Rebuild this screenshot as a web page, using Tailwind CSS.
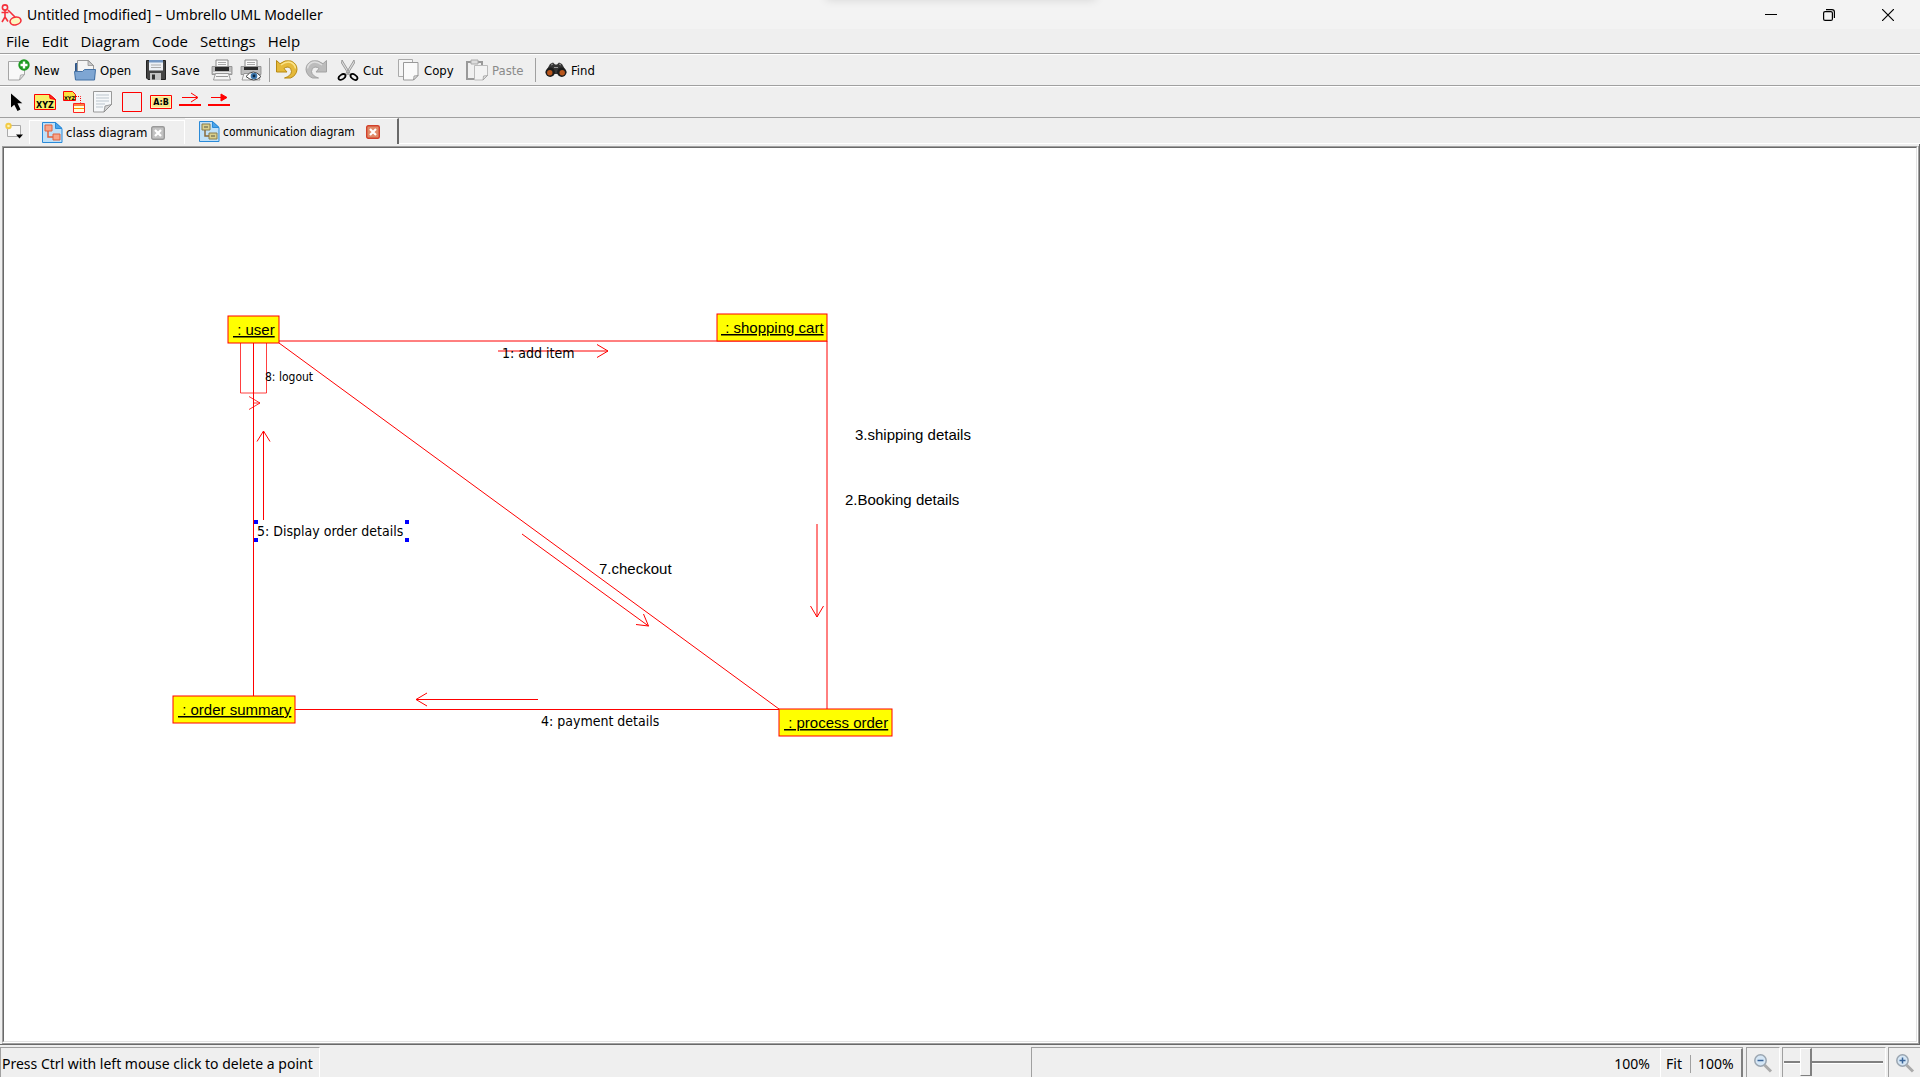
<!DOCTYPE html>
<html lang="en">
<head>
<meta charset="utf-8">
<title>Untitled [modified] – Umbrello UML Modeller</title>
<script src="https://cdn.jsdelivr.net/npm/@tailwindcss/browser@4"></script>
</head>
<body class="h-screen flex flex-col overflow-hidden bg-[#efefef] text-black font-['Open_Sans',sans-serif]">

<!-- Title bar -->
<header class="relative h-[29px] shrink-0 flex items-center bg-[#f3f3f3]">
  <div class="absolute -top-5 left-[43%] w-[270px] h-5 shadow-[0_0_10px_rgba(0,0,0,0.12)]"></div>
  <svg class="w-[22px] h-[22px]" viewBox="0 0 22 22" fill="none" stroke="#f5303a" stroke-width="1.6">
    <circle cx="5" cy="3.500" r="2.600"/><path d="M5 6.100v7M1.500 8.500h7M5 13l-3 5M5 13l3 4.500M8 6l7 7"/>
    <ellipse cx="15.500" cy="17" rx="5.500" ry="3.800" fill="#fdf6c0" transform="rotate(-12 15.500 17)"/>
  </svg>
  <h1 class="ml-[5px] text-[14px] leading-5 font-['Noto_Sans',sans-serif]">Untitled [modified] – Umbrello UML Modeller</h1>
  <div class="ml-auto flex h-full pr-[2px]">
    <button aria-label="Minimize" class="w-[58px] grid place-items-center"><svg class="w-3 h-3" viewBox="0 0 12 12"><path d="M0 5.500h12" stroke="#000"/></svg></button>
    <button aria-label="Restore" class="w-[58px] grid place-items-center"><svg class="w-3 h-3" viewBox="0 0 12 12" fill="none" stroke="#000" stroke-width="1.200"><rect x=".6" y="2.600" width="8.800" height="8.800" rx="1.500"/><path d="M3 .6h6q2.400 0 2.400 2.400v6"/></svg></button>
    <button aria-label="Close" class="w-[60px] grid place-items-center"><svg class="w-3 h-3" viewBox="0 0 12 12"><path d="M0 0l12 12M12 0L0 12" stroke="#000" stroke-width="1.200"/></svg></button>
  </div>
</header>

<!-- Menu bar -->
<nav class="h-[25px] shrink-0 flex items-center gap-3 px-[6px] text-[15px] leading-5 border-b border-[#a0a0a0]">
  <button>File</button><button>Edit</button><button>Diagram</button><button>Code</button><button>Settings</button><button>Help</button>
</nav>

<!-- Main toolbar -->
<div role="toolbar" aria-label="Main" class="h-8 shrink-0 flex items-center pl-2 text-[13px] leading-4 font-['DejaVu_Sans_Condensed','DejaVu_Sans',sans-serif] border-t border-t-white border-b border-b-[#a0a0a0]">
  <button class="w-[66px] flex items-center gap-1 whitespace-nowrap">
    <svg class="w-[22px] h-[22px] shrink-0" viewBox="0 0 22 22"><path d="M.5 2.500h16v13l-5 5.500H.5z" fill="#f8f8f8" stroke="#a5a5a5"/><path d="M11.500 21l1-5 4-.5z" fill="#ddd" stroke="#999" stroke-width=".7"/><circle cx="16" cy="6" r="5.700" fill="#1d9a22"/><path d="M16 2.500v7M12.500 6h7" stroke="#fff" stroke-width="2.400"/></svg><span class="pt-px">New</span></button>
  <button class="w-[71px] flex items-center gap-1 whitespace-nowrap">
    <svg class="w-[22px] h-[22px] shrink-0" viewBox="0 0 22 22"><path d="M1.500 4.500h5v7h14v9h-19z" fill="#3a6398" stroke="#2c5282"/><path d="M3.500 1.500h11l5 5v7h-16z" fill="#f4f4f4" stroke="#999"/><path d="M14 1.500v5h5.500z" fill="#ccc" stroke="#888" stroke-width=".7"/><path d="M.5 12.500h8l2-2h11l-1 10.500H1.500z" fill="#7ea6d3" stroke="#4572a5"/></svg><span class="pt-px">Open</span></button>
  <button class="w-[66px] flex items-center gap-1 whitespace-nowrap">
    <svg class="w-[22px] h-[22px] shrink-0" viewBox="0 0 22 22"><path d="M1.500 1.500h19v19H3l-1.500-1.500z" fill="#444" stroke="#222"/><path d="M4 1h14v10.500H4z" fill="#eef1f5"/><path d="M4 1h14v2.500H4z" fill="#7598c4"/><path d="M6 6h10M6 8.500h10" stroke="#aaa"/><path d="M5 14h11v7H5z" fill="#c4c4c4"/><path d="M7 15.500h3v5H7z" fill="#333"/></svg><span class="pt-px">Save</span></button>
  <button aria-label="Print" class="w-[29px]"><svg class="w-[22px] h-[22px]" viewBox="0 0 22 22"><path d="M5 1h12v8H5z" fill="#fafafa" stroke="#888"/><path d="M7 3.500h8M7 5.500h8" stroke="#aaa"/><path d="M1 7.500h20v8H1z" fill="#bdbdbd" stroke="#888" stroke-width=".8"/><path d="M4 8h14v4H4z" fill="#2b2b2b"/><path d="M2 13.500h18" stroke="#eee"/><path d="M4.500 14.500h13l2 6.500h-17z" fill="#f5f5f5" stroke="#888" stroke-width=".8"/><path d="M5 17.500h12" stroke="#999"/></svg></button>
  <button aria-label="Print preview" class="w-[29px]"><svg class="w-[22px] h-[22px]" viewBox="0 0 22 22"><path d="M5 1h12v8H5z" fill="#fafafa" stroke="#888"/><path d="M7 3.500h8M7 5.500h8" stroke="#aaa"/><path d="M1 7.500h20v8H1z" fill="#bdbdbd" stroke="#888" stroke-width=".8"/><path d="M4 8h14v3H4z" fill="#2b2b2b"/><path d="M4 14.500h14l2 6.500H2z" fill="#f5f5f5" stroke="#888" stroke-width=".8"/><path d="M6 17.500q7-9 15 0-7 7-15 0z" fill="#fff" stroke="#444"/><circle cx="14" cy="17" r="3.300" fill="#3e78ad"/><circle cx="14" cy="17" r="1.400" fill="#0d2845"/></svg></button>
  <div class="w-[6px] h-[24px] border-l border-[#a0a0a0]"></div>
  <button aria-label="Undo" class="w-[30px]"><svg class="w-[23px] h-[22px]" viewBox="0 0 23 22"><path d="M1.500 1.500l3.500 3.200Q10 .5 16 2q6 2.500 6 8.500-.5 6-6.500 8.500h-6q6.500-2 7-6.500 0-4-3.500-4.500-2.500 0-4 1.500l3 3.500H1.500z" fill="#e5b93a" stroke="#b88a13"/><path d="M6 6q5-4 10-2.500 4 2 4.500 6" stroke="#fbe48a" stroke-width="1.500" fill="none"/></svg></button>
  <button aria-label="Redo" class="w-[32px]"><svg class="w-[23px] h-[22px]" viewBox="0 0 23 22"><path d="M21.500 1.500l-3.500 3.200Q13 .5 7 2q-6 2.500-6 8.500.5 6 6.500 8.500h6q-6.500-2-7-6.500 0-4 3.500-4.500 2.500 0 4 1.500l-3 3.500h10.500z" fill="#bcbcbc" stroke="#a3a3a3"/><path d="M17 6q-5-4-10-2.500-4 2-4.500 6" stroke="#dedede" stroke-width="1.500" fill="none"/></svg></button>
  <button class="w-[61px] flex items-center gap-1 whitespace-nowrap">
    <svg class="w-[22px] h-[22px] shrink-0" viewBox="0 0 22 22"><path d="M5 1l8.500 14-1.500 1L4.500 4zM17 1L8.500 15l1.500 1L17.500 4z" fill="#ddd" stroke="#888" stroke-width=".8"/><ellipse cx="5" cy="18" rx="3.800" ry="2.300" transform="rotate(-35 5 18)" fill="none" stroke="#000" stroke-width="1.800"/><ellipse cx="17" cy="18" rx="3.800" ry="2.300" transform="rotate(35 17 18)" fill="none" stroke="#000" stroke-width="1.800"/></svg><span class="pt-px">Cut</span></button>
  <button class="w-[68px] flex items-center gap-1 whitespace-nowrap">
    <svg class="w-[22px] h-[22px] shrink-0" viewBox="0 0 22 22"><path d="M.5.500h14v17H.5z" fill="#f5f5f5" stroke="#aaa"/><path d="M5.500 3.500h14.500v13l-4.500 4.500h-10z" fill="#fafafa" stroke="#999"/><path d="M15.500 21l.5-4 4-.5z" fill="#ddd" stroke="#888" stroke-width=".7"/></svg><span class="pt-px">Copy</span></button>
  <button disabled class="w-[69px] flex items-center gap-1 whitespace-nowrap text-[#8a8a8a]">
    <svg class="w-[22px] h-[22px] shrink-0" viewBox="0 0 22 22"><path d="M1 3h15v17H1z" fill="#f0f0f0" stroke="#999" stroke-width="2"/><path d="M5 1h7v4H5z" fill="#ddd" stroke="#aaa"/><path d="M8.500 6.500h13v10l-4.500 4.500H8.500z" fill="#f3f3f3" stroke="#bbb"/><path d="M17 21l.5-4 4-.5z" fill="#ddd" stroke="#999" stroke-width=".7"/></svg><span class="pt-px">Paste</span></button>
  <div class="w-[10px] h-[24px] border-l border-[#a0a0a0]"></div>
  <button class="flex items-center gap-1 whitespace-nowrap">
    <svg class="w-[22px] h-[22px] shrink-0" viewBox="0 0 22 22"><path d="M5 5l3-1.500 2 2h2l2-2L17 5l4.500 8-4 4-5-2h-3l-5 2-4-4z" fill="#353535"/><circle cx="5.200" cy="13.300" r="4.700" fill="#1c1c1c"/><circle cx="16.800" cy="13.300" r="4.700" fill="#1c1c1c"/><circle cx="4.800" cy="13.800" r="2.700" fill="#b8561c"/><circle cx="17.200" cy="13.800" r="2.700" fill="#b8561c"/><path d="M6 6l2-1M14 5l2 1M9 8.500h4" stroke="#999"/></svg><span class="pt-px">Find</span></button>
</div>

<!-- Diagram tools -->
<div role="toolbar" aria-label="Diagram tools" class="h-8 shrink-0 flex items-center pl-px border-t border-t-white border-b border-b-[#a0a0a0]">
  <button aria-label="Select" class="w-[29px] grid place-items-center"><svg class="w-[22px] h-[22px]" viewBox="0 0 22 22"><path d="M6 2.500v14l3.300-2.800 3.200 6.300 3-1.500-3-6.200h4.800z" fill="#000"/></svg></button>
  <button aria-label="Object" class="w-[29px] grid place-items-center"><svg class="w-[22px] h-[22px]" viewBox="0 0 22 22"><path d="M.5 3.500h15l6 5v10H.5z" fill="#f8f06a" stroke="#f00"/><path d="M15.500 3.500l.5 4 5.500 1z" fill="#e33" stroke="#f00"/><text x="11" y="16.500" text-anchor="middle" font-family="DejaVu Sans" font-weight="700" font-size="8">XYZ</text></svg></button>
  <button aria-label="Instance" class="w-[29px] grid place-items-center"><svg class="w-[22px] h-[22px]" viewBox="0 0 22 22"><path d="M.5.500h9l3 3v6H.5z" fill="#f8e040" stroke="#f00"/><text x="6.500" y="8.500" text-anchor="middle" font-family="DejaVu Sans" font-weight="700" font-size="5">XYZ</text><path d="M13 5.500h4.500v6" fill="none" stroke="#f00" stroke-dasharray="1 1"/><path d="M10.500 12.500h11v9h-11z" fill="#ffd" stroke="#f22"/><path d="M11 14h10" stroke="#f88040" stroke-width="2"/><path d="M11 17.500h10" stroke="#f90"/></svg></button>
  <button aria-label="Note" class="w-[29px] grid place-items-center"><svg class="w-[22px] h-[22px]" viewBox="0 0 22 22"><path d="M1.500 .5h18v13l-7.500 7.500h-10.500z" fill="#f6f8fa" stroke="#999"/><path d="M4 4h13M4 7h13M4 10h13M4 13h9M4 16h7" stroke="#bbc5cd"/><path d="M12 21l1-6 6.500-1.500z" fill="#d5d5d5" stroke="#888" stroke-width=".8"/></svg></button>
  <button aria-label="Box" class="w-[29px] grid place-items-center"><svg class="w-[22px] h-[22px]" viewBox="0 0 22 22"><path d="M1.500 1.500h19v19h-19z" fill="none" stroke="#f00"/></svg></button>
  <button aria-label="Text" class="w-[29px] grid place-items-center"><svg class="w-[22px] h-[22px]" viewBox="0 0 22 22"><path d="M.5 4.500h21v13H.5z" fill="#ffd" stroke="#f00"/><path d="M1.500 5.500h19v11h-19z" fill="#fbe88a"/><text x="11" y="14" text-anchor="middle" font-family="DejaVu Sans" font-weight="700" font-size="8">A:B</text></svg></button>
  <button aria-label="Asynchronous message" class="w-[29px] grid place-items-center"><svg class="w-[22px] h-[22px]" viewBox="0 0 22 22" fill="none" stroke="#f00"><path d="M3 6.500h15M12 2l7 4.500-7 4.500"/><path d="M0 14h22" stroke-width="2"/></svg></button>
  <button aria-label="Synchronous message" class="w-[29px] grid place-items-center"><svg class="w-[22px] h-[22px]" viewBox="0 0 22 22" stroke="#f00"><path d="M3 6.500h10"/><path d="M13 3l6 3.500-6 3.500z" fill="#f00"/><path d="M0 14h22" stroke-width="2"/></svg></button>
</div>

<!-- Diagram tabs -->
<div class="h-[26px] shrink-0 flex text-[13px] leading-4 font-['DejaVu_Sans_Condensed','DejaVu_Sans',sans-serif]">
  <button aria-label="New diagram" class="w-[29px] grid place-items-center"><svg class="w-[20px] h-[18px]" viewBox="0 0 20 18"><path d="M2.500 3.500h13v11h-13z" fill="#f7f7f7" stroke="#aaa"/><circle cx="3.500" cy="4" r="3.200" fill="#f3cb45"/><circle cx="3.500" cy="4" r="1.300" fill="#fff3b0"/><path d="M11 12.500h7l-3.500 4z" fill="#000"/></svg></button>
  <div class="mt-[2px] w-[156px] flex items-center pl-[12px] gap-[3px] border-l border-t border-r border-white">
    <svg class="w-[21px] h-[21px] shrink-0" viewBox="0 0 21 21"><path d="M.5.500h13l6.500 6v14H.5z" fill="#bfe0f8" stroke="#2a8ad8"/><path d="M13.500.500v6h6.500z" fill="#4aa3e8" stroke="#2a8ad8"/><path d="M3 3h7v6H3zM11 12h7v6h-7z" fill="#f6a58a" stroke="#e0603c"/><path d="M6 9v6h5" fill="none" stroke="#e0603c" stroke-width="1.500"/></svg>
    <button class="w-[82px] text-left whitespace-nowrap">class diagram</button>
    <button aria-label="Close class diagram"><svg class="w-[14px] h-[14px]" viewBox="0 0 14 14"><rect x=".7" y=".7" width="12.600" height="12.600" rx="1.500" fill="#c2c2c2" stroke="#999" stroke-width="1.400"/><path d="M4 4l6 6M10 4l-6 6" stroke="#fff" stroke-width="2.200"/></svg></button>
  </div>
  <div class="w-[214px] flex items-center pl-[14px] gap-[3px] border-t border-t-white border-r-2 border-r-[#696969]">
    <svg class="w-[21px] h-[21px] shrink-0" viewBox="0 0 21 21"><path d="M.5.500h13l6.500 6v14H.5z" fill="#bfe0f8" stroke="#2a8ad8"/><path d="M13.500.500v6h6.500z" fill="#4aa3e8" stroke="#2a8ad8"/><path d="M3 3h8v6H3zM10 12h8v6h-8z" fill="#d9cf8c" stroke="#8a7d4a"/><path d="M5 6h4M12 15h4" stroke="#554"/><path d="M6 9v6h4" fill="none" stroke="#8a6a3a" stroke-width="1.500"/></svg>
    <button class="w-[140px] text-left text-[12px] whitespace-nowrap">communication diagram</button>
    <button aria-label="Close communication diagram"><svg class="w-[14px] h-[14px]" viewBox="0 0 14 14"><rect x=".7" y=".7" width="12.600" height="12.600" rx="1.500" fill="#e08a68" stroke="#d2402a" stroke-width="1.400"/><path d="M4 4l6 6M10 4l-6 6" stroke="#fff" stroke-width="2.200"/></svg></button>
  </div>
  <div class="grow border-b border-white"></div>
</div>

<!-- Canvas -->
<main class="grow min-h-0 pl-[2px] pt-[2px] border-r border-b border-[#696969]">
  <div class="h-full border-r border-b border-[#a0a0a0]">
  <div class="h-full border-l border-t border-l-[#a0a0a0] border-t-[#a0a0a0] border-r border-b border-r-white border-b-white">
  <div class="h-full border-l border-t border-l-[#696969] border-t-[#696969] border-r border-b border-r-[#e3e3e3] border-b-[#e3e3e3] bg-white overflow-hidden">
    <svg class="w-full h-full" fill="none" stroke="#f00" role="img" aria-label="Communication diagram">
      <g transform="translate(-4 -148)">
        <g>
          <path d="M279 341H827V709"/>
          <path d="M779 709.500H295M253.500 343V696"/>
          <path d="M279 343L779 709"/>
          <path d="M240.500 343V393H266.500V343" stroke-opacity=".75"/>
        </g>
        <g>
          <path d="M249 396.500L260 403L249 409.500M253 403H260" stroke-opacity=".8"/>
          <path d="M263.500 520V431M257 441.500L263.500 431L270 441.500"/>
          <path d="M498 351H608M597 344.500L608 351L597 357.500"/>
          <path d="M817 524V617M810.500 606L817 617L823.500 606"/>
          <path d="M538 699.500H416M427 693L416 699.500L427 706"/>
          <path d="M522 534L648.500 626M643.500 614L648.500 626L636 624.500"/>
        </g>
        <g fill="#ff0">
          <rect x="228" y="316" width="51" height="27"/>
          <rect x="717" y="314" width="110" height="27"/>
          <rect x="779" y="709" width="113" height="27"/>
          <rect x="173" y="696" width="122" height="27"/>
        </g>
        <g fill="#000" stroke="none" font-family="Liberation Sans, Arial, sans-serif" font-size="15">
          <g text-decoration="underline">
            <text x="233" y="335">&nbsp;: user</text>
            <text x="721" y="333">&nbsp;: shopping cart</text>
            <text x="784" y="728">&nbsp;: process order</text>
            <text x="178" y="715">&nbsp;: order summary</text>
          </g>
          <text x="855" y="440">3.shipping details</text>
          <text x="845" y="505">2.Booking details</text>
          <text x="599" y="574">7.checkout</text>
        </g>
        <g fill="#000" stroke="none" font-family="DejaVu Sans Condensed, DejaVu Sans, sans-serif" font-size="14">
          <text x="502" y="358">1: add item</text>
          <text x="257" y="536">5: Display order details</text>
          <text x="541" y="726">4: payment details</text>
          <text x="265" y="381" font-size="12">8: logout</text>
        </g>
        <g fill="#00f" stroke="none">
          <rect x="254" y="520" width="4" height="4"/><rect x="405" y="520" width="4" height="4"/>
          <rect x="254" y="538" width="4" height="4"/><rect x="405" y="538" width="4" height="4"/>
        </g>
      </g>
    </svg>
  </div></div></div>
</main>

<!-- Status bar -->
<footer class="h-8 shrink-0 flex pt-[2px] text-[14px] leading-5 font-['Noto_Sans',sans-serif]">
  <div class="w-[320px] pl-px pt-[6px] whitespace-nowrap border-l border-t border-[#a0a0a0] border-r border-r-white">Press Ctrl with left mouse click to delete a point</div>
  <div class="ml-auto w-[712px] flex justify-end border-l border-t border-[#a0a0a0]">
    <span class="pt-[6px] mr-[10px]">100%</span>
    <div class="w-[83px] flex items-center pt-[2px] pl-[5px] border-l border-t border-white border-r-2 border-r-[#808080]">
      <button class="w-[24px] text-left">Fit</button>
      <div class="h-[18px] w-[8px] border-l border-[#a0a0a0]"></div>
      <button>100%</button>
    </div>
  </div>
  <div class="ml-[3px] w-[34px] flex items-center justify-center border-l border-t border-[#a0a0a0] border-r border-r-white">
    <button aria-label="Zoom out" class="grid"><svg class="w-[20px] h-[20px]" viewBox="0 0 20 20"><path d="M11.500 12l6.500 6.500" stroke="#aaa" stroke-width="3"/><circle cx="7.500" cy="7.500" r="5.700" fill="#d5e6f5" stroke="#9aa5b0" stroke-width="1.500"/><path d="M4.500 7.500h6" stroke="#3a6498" stroke-width="1.500"/></svg></button>
  </div>
  <div class="ml-[2px] w-[104px] flex items-center pl-px pr-[2px] border-l border-t border-[#a0a0a0] border-r border-r-white">
    <input type="range" aria-label="Zoom" min="0" max="100" value="18" class="w-full h-full appearance-none bg-transparent [&::-webkit-slider-runnable-track]:h-[3px] [&::-webkit-slider-runnable-track]:bg-[#808080] [&::-webkit-slider-runnable-track]:border-b [&::-webkit-slider-runnable-track]:border-white [&::-webkit-slider-thumb]:appearance-none [&::-webkit-slider-thumb]:w-3 [&::-webkit-slider-thumb]:h-7 [&::-webkit-slider-thumb]:-mt-[13px] [&::-webkit-slider-thumb]:bg-[#efefef] [&::-webkit-slider-thumb]:border [&::-webkit-slider-thumb]:border-white [&::-webkit-slider-thumb]:border-r-2 [&::-webkit-slider-thumb]:border-r-[#808080] [&::-webkit-slider-thumb]:border-b-[#808080]">
  </div>
  <div class="ml-[2px] w-[32px] flex items-center justify-center border-l border-t border-[#a0a0a0]">
    <button aria-label="Zoom in" class="grid"><svg class="w-[20px] h-[20px]" viewBox="0 0 20 20"><path d="M11.500 12l6.500 6.500" stroke="#aaa" stroke-width="3"/><circle cx="7.500" cy="7.500" r="5.700" fill="#d5e6f5" stroke="#9aa5b0" stroke-width="1.500"/><path d="M4.500 7.500h6M7.500 4.500v6" stroke="#3a6498" stroke-width="1.500"/></svg></button>
  </div>
</footer>
</body>
</html>
